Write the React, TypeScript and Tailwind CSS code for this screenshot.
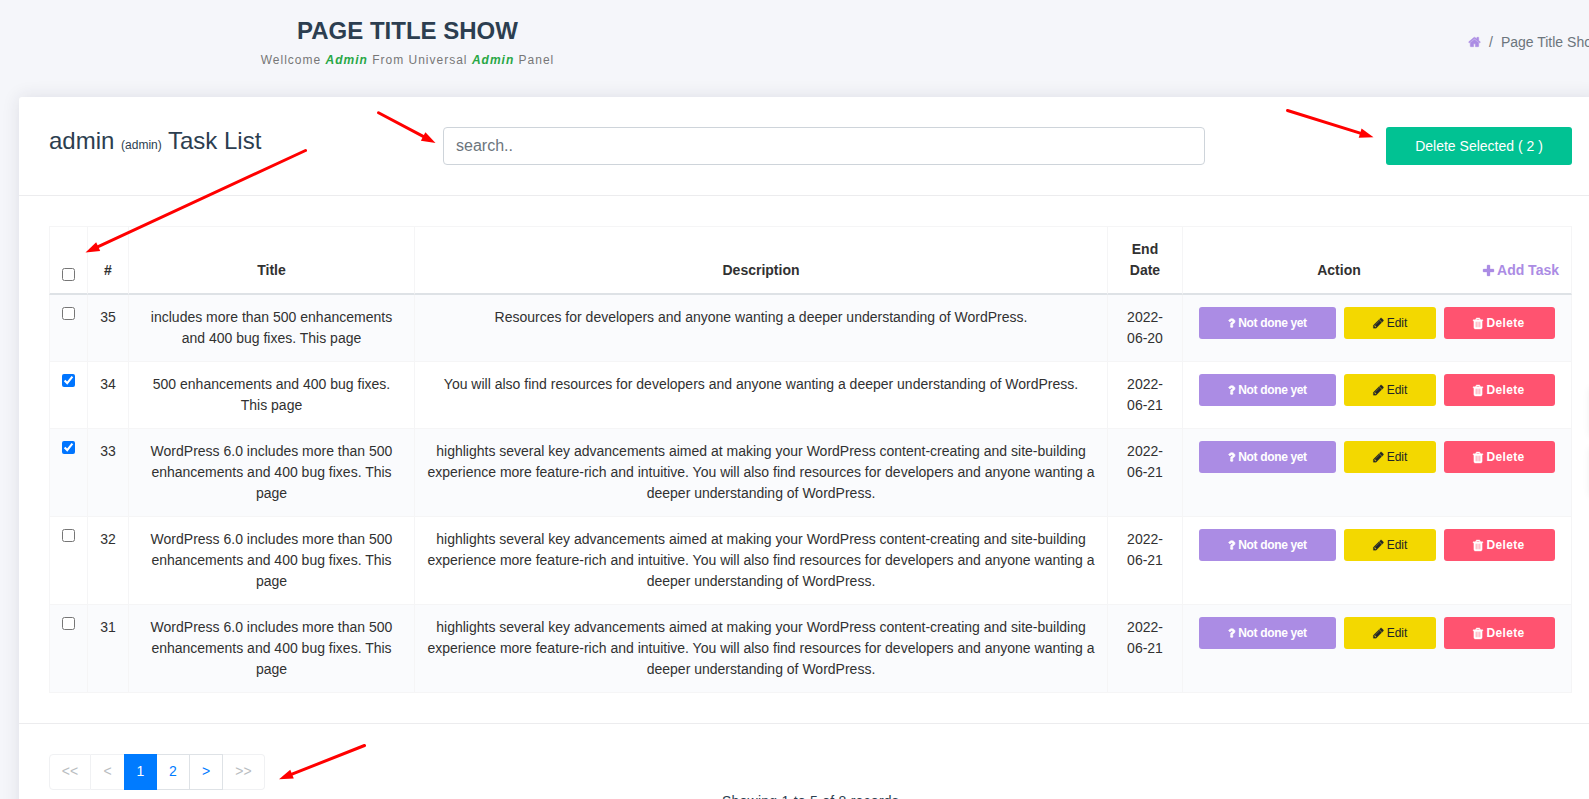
import type { ReactNode } from "react";

const ICONS = {
  home: {
    box: "0 0 1792 1792",
    weight: 70,
    d: "M1472 992v480q0 26-19 45t-45 19h-384v-384h-256v384h-384q-26 0-45-19t-19-45v-480q0-1 .5-3t.5-3l575-474 575 474q1 2 1 6zm223-69l-62 74q-8 9-21 11h-3q-13 0-21-7l-692-577-692 577q-12 8-24 7-13-2-21-11l-62-74q-8-10-7-23.5t11-21.5l719-599q32-26 76-26t76 26l244 204v-195q0-14 9-23t23-9h192q14 0 23 9t9 23v408l219 182q10 8 11 21.5t-7 23.5z",
  },
  plus: {
    box: "192 0 1408 1792",
    weight: 40,
    d: "M1600 736v192q0 40-28 68t-68 28h-416v416q0 40-28 68t-68 28h-192q-40 0-68-28t-28-68v-416h-416q-40 0-68-28t-28-68v-192q0-40 28-68t68-28h416v-416q0-40 28-68t68-28h192q40 0 68 28t28 68v416h416q40 0 68 28t28 68z",
  },
  question: {
    box: "384 0 1024 1792",
    weight: 110,
    d: "M1088 1256v240q0 16-12 28t-28 12h-240q-16 0-28-12t-12-28v-240q0-16 12-28t28-12h240q16 0 28 12t12 28zm316-600q0 54-15.5 101t-35 76.5-55 59.5-57.5 43.5-61 35.5q-41 23-68.5 65t-27.5 67q0 17-12 32.5t-28 15.5h-240q-15 0-25.5-18.5t-10.5-37.5v-45q0-83 65-156.5t143-108.5q59-27 84-56t25-76q0-42-46.5-74t-107.5-32q-65 0-108 29-35 25-107 115-13 16-31 16-12 0-25-8l-164-125q-13-10-15.5-25t5.5-28q160-266 464-266 80 0 161 31t146 83 106 127.5 41 158.5z",
  },
  pencil: {
    box: "128 0 1536 1792",
    weight: 40,
    d: "M491 1536l91-91-235-235-91 91v107h128v128h107zm523-928q0-22-22-22-10 0-17 7l-542 542q-7 7-7 17 0 22 22 22 10 0 17-7l542-542q7-7 7-17zm-54-192l416 416-832 832h-416v-416zm683 96q0 53-37 90l-166 166-416-416 166-165q36-38 90-38 53 0 91 38l235 234q37 39 37 91z",
  },
  trash: {
    box: "0 0 1408 1792",
    weight: 60,
    d: "M512 1376v-704q0-14-9-23t-23-9h-64q-14 0-23 9t-9 23v704q0 14 9 23t23 9h64q14 0 23-9t9-23zm256 0v-704q0-14-9-23t-23-9h-64q-14 0-23 9t-9 23v704q0 14 9 23t23 9h64q14 0 23-9t9-23zm256 0v-704q0-14-9-23t-23-9h-64q-14 0-23 9t-9 23v704q0 14 9 23t23 9h64q14 0 23-9t9-23zm-544-992h448l-48-117q-7-9-17-11h-317q-10 2-17 11zm928 32v64q0 14-9 23t-23 9h-96v948q0 83-47 143.5t-113 60.5h-832q-66 0-113-58.5t-47-141.5v-952h-96q-14 0-23-9t-9-23v-64q0-14 9-23t23-9h309l70-167q15-37 54-63t79-26h320q40 0 79 26t54 63l70 167h309q14 0 23 9t9 23z",
  },
};

function Icon({ name, className }: { name: keyof typeof ICONS; className: string }) {
  return (
    <svg
      viewBox={ICONS[name].box}
      className={`shrink-0 overflow-visible fill-current stroke-current ${className}`}
      strokeWidth={ICONS[name].weight}
      aria-hidden="true"
    >
      <path d={ICONS[name].d} />
    </svg>
  );
}

const LONG_TITLE = ["WordPress 6.0 includes more than 500", "enhancements and 400 bug fixes. This", "page"];
const LONG_TEXT = [
  "highlights several key advancements aimed at making your WordPress content-creating and site-building",
  "experience more feature-rich and intuitive. You will also find resources for developers and anyone wanting a",
  "deeper understanding of WordPress.",
];

const TASKS = [
  {
    id: 35,
    checked: false,
    title: ["includes more than 500 enhancements", "and 400 bug fixes. This page"],
    text: ["Resources for developers and anyone wanting a deeper understanding of WordPress."],
    date: ["2022-", "06-20"],
  },
  {
    id: 34,
    checked: true,
    title: ["500 enhancements and 400 bug fixes.", "This page"],
    text: ["You will also find resources for developers and anyone wanting a deeper understanding of WordPress."],
    date: ["2022-", "06-21"],
  },
  { id: 33, checked: true, title: LONG_TITLE, text: LONG_TEXT, date: ["2022-", "06-21"] },
  { id: 32, checked: false, title: LONG_TITLE, text: LONG_TEXT, date: ["2022-", "06-21"] },
  { id: 31, checked: false, title: LONG_TITLE, text: LONG_TEXT, date: ["2022-", "06-21"] },
];

function Lines({ items }: { items: string[] }) {
  return (
    <>
      {items.map((line, i) => (
        <span key={i} className="block whitespace-nowrap">
          {line}
        </span>
      ))}
    </>
  );
}

function Cell({ children, last }: { children: ReactNode; last?: boolean }) {
  return (
    <td
      className={
        last
          ? "border-x border-b border-[#f5f5f6] p-3 align-top"
          : "border-b border-l border-[#f5f5f6] px-0 py-3 align-top"
      }
    >
      {children}
    </td>
  );
}

function Arrow({ from, to }: { from: [number, number]; to: [number, number] }) {
  const dx = to[0] - from[0];
  const dy = to[1] - from[1];
  const len = Math.hypot(dx, dy);
  const ux = dx / len;
  const uy = dy / len;
  const bx = to[0] - ux * 14;
  const by = to[1] - uy * 14;
  return (
    <g>
      <line x1={from[0]} y1={from[1]} x2={bx} y2={by} strokeWidth="3" strokeLinecap="round" />
      <polygon
        points={`${to[0]},${to[1]} ${bx - uy * 4.8},${by + ux * 4.8} ${bx + uy * 4.8},${by - ux * 4.8}`}
        stroke="none"
      />
    </g>
  );
}

const HEAD = "border-t border-l border-b-2 border-t-[#f5f5f6] border-l-[#f5f5f6] border-b-[#dee2e6] py-3 align-bottom font-bold";

export default function App() {
  return (
    <div className="relative h-[799px] w-full overflow-hidden bg-[#f5f6fa] font-['Liberation_Sans',Arial,sans-serif] text-sm leading-[21px] text-[#313131]">
      <header className="flex h-[97px] justify-between">
        <div className="w-[815px] pt-4 text-center">
          <h1 className="text-2xl leading-[29px] font-bold text-[#2c3e50]">PAGE TITLE SHOW</h1>
          <p className="pt-[5px] text-xs leading-5 tracking-[1px] text-[#777]">
            Wellcome <em className="font-bold text-[#28a745]">Admin</em> From Universal{" "}
            <em className="font-bold text-[#28a745]">Admin</em> Panel
          </p>
        </div>
        <nav className="flex w-[121px] items-start pt-8 whitespace-nowrap text-[#6c757d]">
          <Icon name="home" className="mt-[3px] h-3.5 w-[13px] text-[#ab8ce4]" />
          <span className="ml-2">/</span>
          <span className="ml-2">Page Title Show</span>
        </nav>
      </header>

      <main className="ml-[19px] h-[760px] w-[1583px] rounded-[3px] bg-white shadow-[0_0_18px_rgba(40,40,60,0.11)]">
        <section className="flex h-[99px] items-start border-b border-[#ececee] pt-[30px] pl-[30px]">
          <h2 className="-mt-px w-[394px] text-2xl leading-[29px] whitespace-nowrap text-[#2c3e50]">
            admin <small className="text-xs">(admin)</small> Task List
          </h2>
          <input
            placeholder="search.."
            className="h-[38px] w-[762px] rounded border border-[#ced4da] px-3 text-base text-[#495057] placeholder:text-[#6c757d]"
          />
          <button className="ml-[181px] h-[38px] w-[186px] rounded-[3px] bg-[#01c293] text-white">
            Delete Selected ( 2 )
          </button>
        </section>

        <section className="h-[528px] border-b border-[#ececee] pt-[30px] pl-[30px]">
          <table className="w-[1523px] table-fixed border-separate border-spacing-0 text-center">
            <colgroup>
              <col className="w-[38px]" />
              <col className="w-[41px]" />
              <col className="w-[286px]" />
              <col className="w-[693px]" />
              <col className="w-[75px]" />
              <col className="w-[390px]" />
            </colgroup>
            <thead>
              <tr>
                <th className={HEAD}>
                  <input type="checkbox" className="mx-auto block h-[13px] w-[13px]" />
                </th>
                <th className={HEAD}>#</th>
                <th className={HEAD}>Title</th>
                <th className={HEAD}>Description</th>
                <th className={HEAD}>
                  <Lines items={["End", "Date"]} />
                </th>
                <th className={`${HEAD} border-r border-r-[#f5f5f6] px-3`}>
                  <div className="flex">
                    <span className="flex-1">Action</span>
                    <a className="flex w-[76px] items-center justify-between whitespace-nowrap text-[#ab8ce4]">
                      <Icon name="plus" className="h-3.5 w-[11px]" />
                      Add Task
                    </a>
                  </div>
                </th>
              </tr>
            </thead>
            <tbody>
              {TASKS.map((task) => (
                <tr key={task.id} className="odd:bg-[#fafbfd]">
                  <Cell>
                    <input type="checkbox" defaultChecked={task.checked} className="mx-auto block h-[13px] w-[13px]" />
                  </Cell>
                  <Cell>{task.id}</Cell>
                  <Cell>
                    <Lines items={task.title} />
                  </Cell>
                  <Cell>
                    <Lines items={task.text} />
                  </Cell>
                  <Cell>
                    <Lines items={task.date} />
                  </Cell>
                  <Cell last>
                    <div className="flex justify-center gap-2 text-xs whitespace-nowrap">
                      <button className="flex h-8 w-[137px] items-center justify-center gap-[3px] rounded-[3px] bg-[#ab8ce4] font-bold tracking-[-0.35px] text-white">
                        <Icon name="question" className="h-3 w-[7px]" />
                        Not done yet
                      </button>
                      <button className="flex h-8 w-[92px] items-center justify-center gap-[3px] rounded-[3px] bg-[#f3d800] text-[#212529]">
                        <Icon name="pencil" className="h-3 w-[11px]" />
                        Edit
                      </button>
                      <button className="flex h-8 w-[111px] items-center justify-center gap-1 rounded-[3px] bg-[#ff5370] pr-0.5 font-bold tracking-[0.3px] text-white">
                        <Icon name="trash" className="h-[13px] w-[10px]" />
                        Delete
                      </button>
                    </div>
                  </Cell>
                </tr>
              ))}
            </tbody>
          </table>
        </section>

        <footer className="px-[30px] pt-[30px]">
          <nav className="flex h-9 text-center leading-[33px] text-[#007bff]">
            <span className="w-[42px] rounded-l border border-[#f0f1f3] text-[#b9bdc1]">&lt;&lt;</span>
            <span className="w-[33px] border-y border-[#f0f1f3] text-[#b9bdc1]">&lt;</span>
            <span className="w-[33px] border border-[#007bff] bg-[#007bff] text-white">1</span>
            <span className="w-[33px] border-y border-r border-[#dee2e6]">2</span>
            <span className="w-[33px] border-y border-r border-[#dee2e6]">&gt;</span>
            <span className="w-[42px] rounded-r border-y border-r border-[#f0f1f3] text-[#b9bdc1]">&gt;&gt;</span>
          </nav>
          <p className="pt-px text-center leading-[21px] tracking-[0.25px] text-[#2c3e50]">Showing 1 to 5 of 8 records</p>
        </footer>
      </main>

      <div className="absolute top-[388px] left-[1590px] h-12 w-10 shadow-[0_0_8px_rgba(0,0,0,0.07)]" />
      <div className="absolute top-[448px] left-[1590px] h-12 w-10 shadow-[0_0_8px_rgba(0,0,0,0.07)]" />

      <svg
        viewBox="0 0 1589 799"
        className="pointer-events-none absolute top-0 left-0 h-[799px] w-[1589px] fill-[#ff0000] stroke-[#ff0000]"
        aria-hidden="true"
      >
        <Arrow from={[378.5, 112.7]} to={[435.5, 143]} />
        <Arrow from={[305.5, 150.5]} to={[85.5, 252.5]} />
        <Arrow from={[1287.5, 110.5]} to={[1373.5, 137.3]} />
        <Arrow from={[364.5, 745.5]} to={[279, 779.3]} />
      </svg>
    </div>
  );
}
